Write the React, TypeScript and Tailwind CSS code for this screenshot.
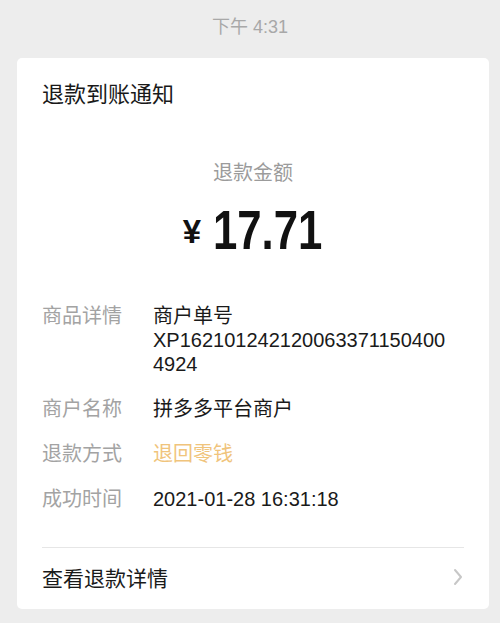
const font = "font-['Liberation_Sans','Noto_Sans_CJK_SC',sans-serif]";

type Row = { label: string; value: string; tone?: "orange" };

const rows: Row[] = [
  { label: "商品详情", value: "商户单号 XP1621012421200633711504004924" },
  { label: "商户名称", value: "拼多多平台商户" },
  { label: "退款方式", value: "退回零钱", tone: "orange" },
  { label: "成功时间", value: "2021-01-28 16:31:18" },
];

function DetailRow({ row }: { row: Row }) {
  // the order number wraps on its own line under "商户单号"
  const [head, ...rest] = row.value.split(" ");
  const isOrder = row.label === "商品详情";
  return (
    <div className="flex text-[20px] leading-[24px]">
      <span className="w-[111px] shrink-0 text-[#a3a3a3]">{row.label}</span>
      {isOrder ? (
        <span className="max-w-[300px] break-all text-[#1a1a1a]">
          {head}
          <br />
          {rest.join(" ")}
        </span>
      ) : (
        <span className={row.tone === "orange" ? "text-[#f0c47c]" : "text-[#1a1a1a]"}>
          {row.value}
        </span>
      )}
    </div>
  );
}

export default function App() {
  return (
    <div className={`min-h-[623px] w-full bg-[#ededed] pt-[15px] pb-[15px] ${font}`}>
      <div className="text-center text-[18px] leading-[24px] text-[#a8a8a8]">下午 4:31</div>

      <div className="mt-[19px] ml-[17px] mr-[11px] rounded-[5px] bg-white">
        <div className="px-[25px] pt-[22px]">
          <div className="text-[22px] leading-[30px] text-[#191919]">退款到账通知</div>

          <div className="mt-[50px] text-center text-[20px] leading-[26px] text-[#9b9b9b]">退款金额</div>

          <div className="mt-[14px] flex h-[60px] items-center justify-center text-[#111]">
            <span className="mr-[12px] mt-[3px] text-[33px] font-bold leading-none">¥</span>
            {/* the reference digits are condensed; squeeze Liberation Sans to match */}
            <span className="w-[110px] overflow-visible whitespace-nowrap">
              <span className="inline-block origin-left scale-x-[0.78] text-[56px] font-bold leading-none">
                17.71
              </span>
            </span>
          </div>

          <div className="mt-[44px] flex flex-col gap-[21px]">
            {rows.map((r) => (
              <DetailRow key={r.label} row={r} />
            ))}
          </div>

          <div className="mt-[36px] h-px bg-[#e6e6e6]" />
        </div>

        <div className="flex h-[61px] items-center justify-between pl-[25px] pr-[26px]">
          <span className="text-[21px] text-[#1a1a1a]">查看退款详情</span>
          <svg width="10" height="18" viewBox="0 0 10 18" fill="none" className="-mt-[3px]">
            <polyline
              points="2,2 8,9 2,16"
              stroke="#c7c7c7"
              strokeWidth="2"
              strokeLinecap="round"
              strokeLinejoin="round"
            />
          </svg>
        </div>
      </div>
    </div>
  );
}
